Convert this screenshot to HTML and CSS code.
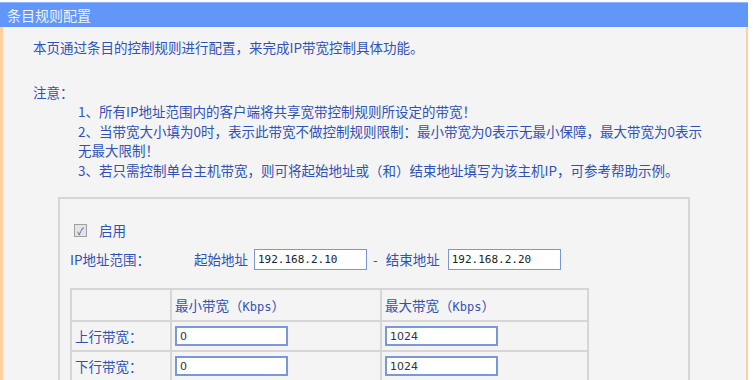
FILE: index.html
```html
<!DOCTYPE html>
<html lang="zh-CN">

<head>
    <meta charset="UTF-8">
    <meta name="viewport" content="width=device-width, initial-scale=1.0">
    <link rel="stylesheet" href="styles.css">
    <title>条目规则配置</title>
</head>

<body>
    <div class="panel">
        <div class="panel-title">条目规则配置</div>
        <div class="panel-body">
            <p class="intro">本页通过条目的控制规则进行配置，来完成IP带宽控制具体功能。</p>
            <p class="note-title">注意：</p>
            <div class="notes">
                <p>1、所有IP地址范围内的客户端将共享宽带控制规则所设定的带宽！</p>
                <p>2、当带宽大小填为0时，表示此带宽不做控制规则限制：最小带宽为0表示无最小保障，最大带宽为0表示<br>无最大限制！</p>
                <p>3、若只需控制单台主机带宽，则可将起始地址或（和）结束地址填写为该主机IP，可参考帮助示例。</p>
            </div>

            <div class="rule-box">
                <label class="enable-row">
                    <span class="check">&#10003;</span>
                    <span>启用</span>
                </label>
                <div class="ip-row">
                    <span class="ip-label">IP地址范围：</span>
                    <span class="ip-field">起始地址</span>
                    <input class="text-input" type="text" value="192.168.2.10">
                    <span class="dash">-</span>
                    <span class="ip-field end-field">结束地址</span>
                    <input class="text-input" type="text" value="192.168.2.20">
                </div>
                <table class="bw-table">
                    <tr>
                        <th class="col-name"></th>
                        <th class="col-min">最小带宽（<span class="unit">Kbps</span>）</th>
                        <th class="col-max">最大带宽（<span class="unit">Kbps</span>）</th>
                    </tr>
                    <tr>
                        <td>上行带宽：</td>
                        <td><input class="cell-input" type="text" value="0"></td>
                        <td><input class="cell-input" type="text" value="1024"></td>
                    </tr>
                    <tr>
                        <td>下行带宽：</td>
                        <td><input class="cell-input" type="text" value="0"></td>
                        <td><input class="cell-input" type="text" value="1024"></td>
                    </tr>
                </table>
            </div>
        </div>
    </div>
</body>

</html>
```

FILE: styles.css
```css
body {
    margin: 0;
    padding: 0;
    background-color: #ffffff;
    font-family: "Noto Sans CJK SC", "Liberation Sans", sans-serif;
    font-size: 13.5px;
    color: #3052b6;
    overflow: hidden;
}

.panel {
    width: 748px;
    height: 380px;
    padding-top: 2px;
    box-sizing: border-box;
}

.panel-title {
    height: 25px;
    line-height: 24px;
    background-color: #6197f9;
    border-top: 1px solid #8fb4fb;
    color: #eef3ff;
    font-size: 14px;
    padding-left: 7px;
    box-sizing: border-box;
}

.panel-body {
    height: 360px;
    background-color: #f4f4f4;
    border-left: 3px solid #ffcf9e;
    border-right: 2px solid #ffcf9e;
    padding-left: 30px;
    padding-top: 10px;
    box-sizing: border-box;
}

p {
    margin: 0;
}

.intro {
    line-height: 20px;
}

.note-title {
    margin-top: 25px;
    line-height: 20px;
}

.notes {
    padding-left: 45px;
    width: 640px;
}

.notes p {
    line-height: 19.5px;
    white-space: nowrap;
}

.rule-box {
    margin-top: 17px;
    margin-left: 25px;
    width: 632px;
    height: 200px;
    border: 2px solid #d6d6d6;
    border-bottom: none;
    box-sizing: border-box;
    padding: 22px 0 0 10px;
}

.enable-row {
    display: flex;
    align-items: center;
    gap: 12px;
    padding-left: 4px;
    height: 18px;
}

.check {
    width: 11px;
    height: 11px;
    border: 1px solid #a0a0a0;
    background-color: #e4e4e4;
    color: #3a52a0;
    font-size: 10px;
    line-height: 11px;
    text-align: center;
}

.ip-row {
    display: flex;
    align-items: center;
    margin-top: 9px;
    height: 22px;
}

.ip-label {
    width: 124px;
}

.ip-field {
    margin-right: 6px;
}

.end-field {
    margin-right: 8px;
}

.dash {
    margin: 0 8px 0 6px;
}

.text-input {
    width: 113px;
    height: 21px;
    border: 1px solid #7b98d6;
    background-color: #ffffff;
    box-sizing: border-box;
    font-family: "DejaVu Sans Mono", monospace;
    font-size: 11px;
    color: #222;
    padding: 0 3px;
}

.bw-table {
    margin-top: 18px;
    border-collapse: collapse;
}

.bw-table th,
.bw-table td {
    border: 2px solid #d6d6d6;
    height: 28px;
    padding: 0 3px;
    text-align: left;
    font-weight: normal;
}

.bw-table th {
    height: 30px;
}

.unit {
    font-family: "DejaVu Sans Mono", monospace;
    font-size: 12px;
}

.col-name {
    width: 92px;
}

.col-min {
    width: 202px;
}

.col-max {
    width: 199px;
}

.cell-input {
    width: 113px;
    height: 20px;
    border: 2px solid #7b98d6;
    background-color: #ffffff;
    box-sizing: border-box;
    font-family: "DejaVu Sans", sans-serif;
    font-size: 11px;
    color: #333;
    padding: 0 3px;
    display: block;
}
```
